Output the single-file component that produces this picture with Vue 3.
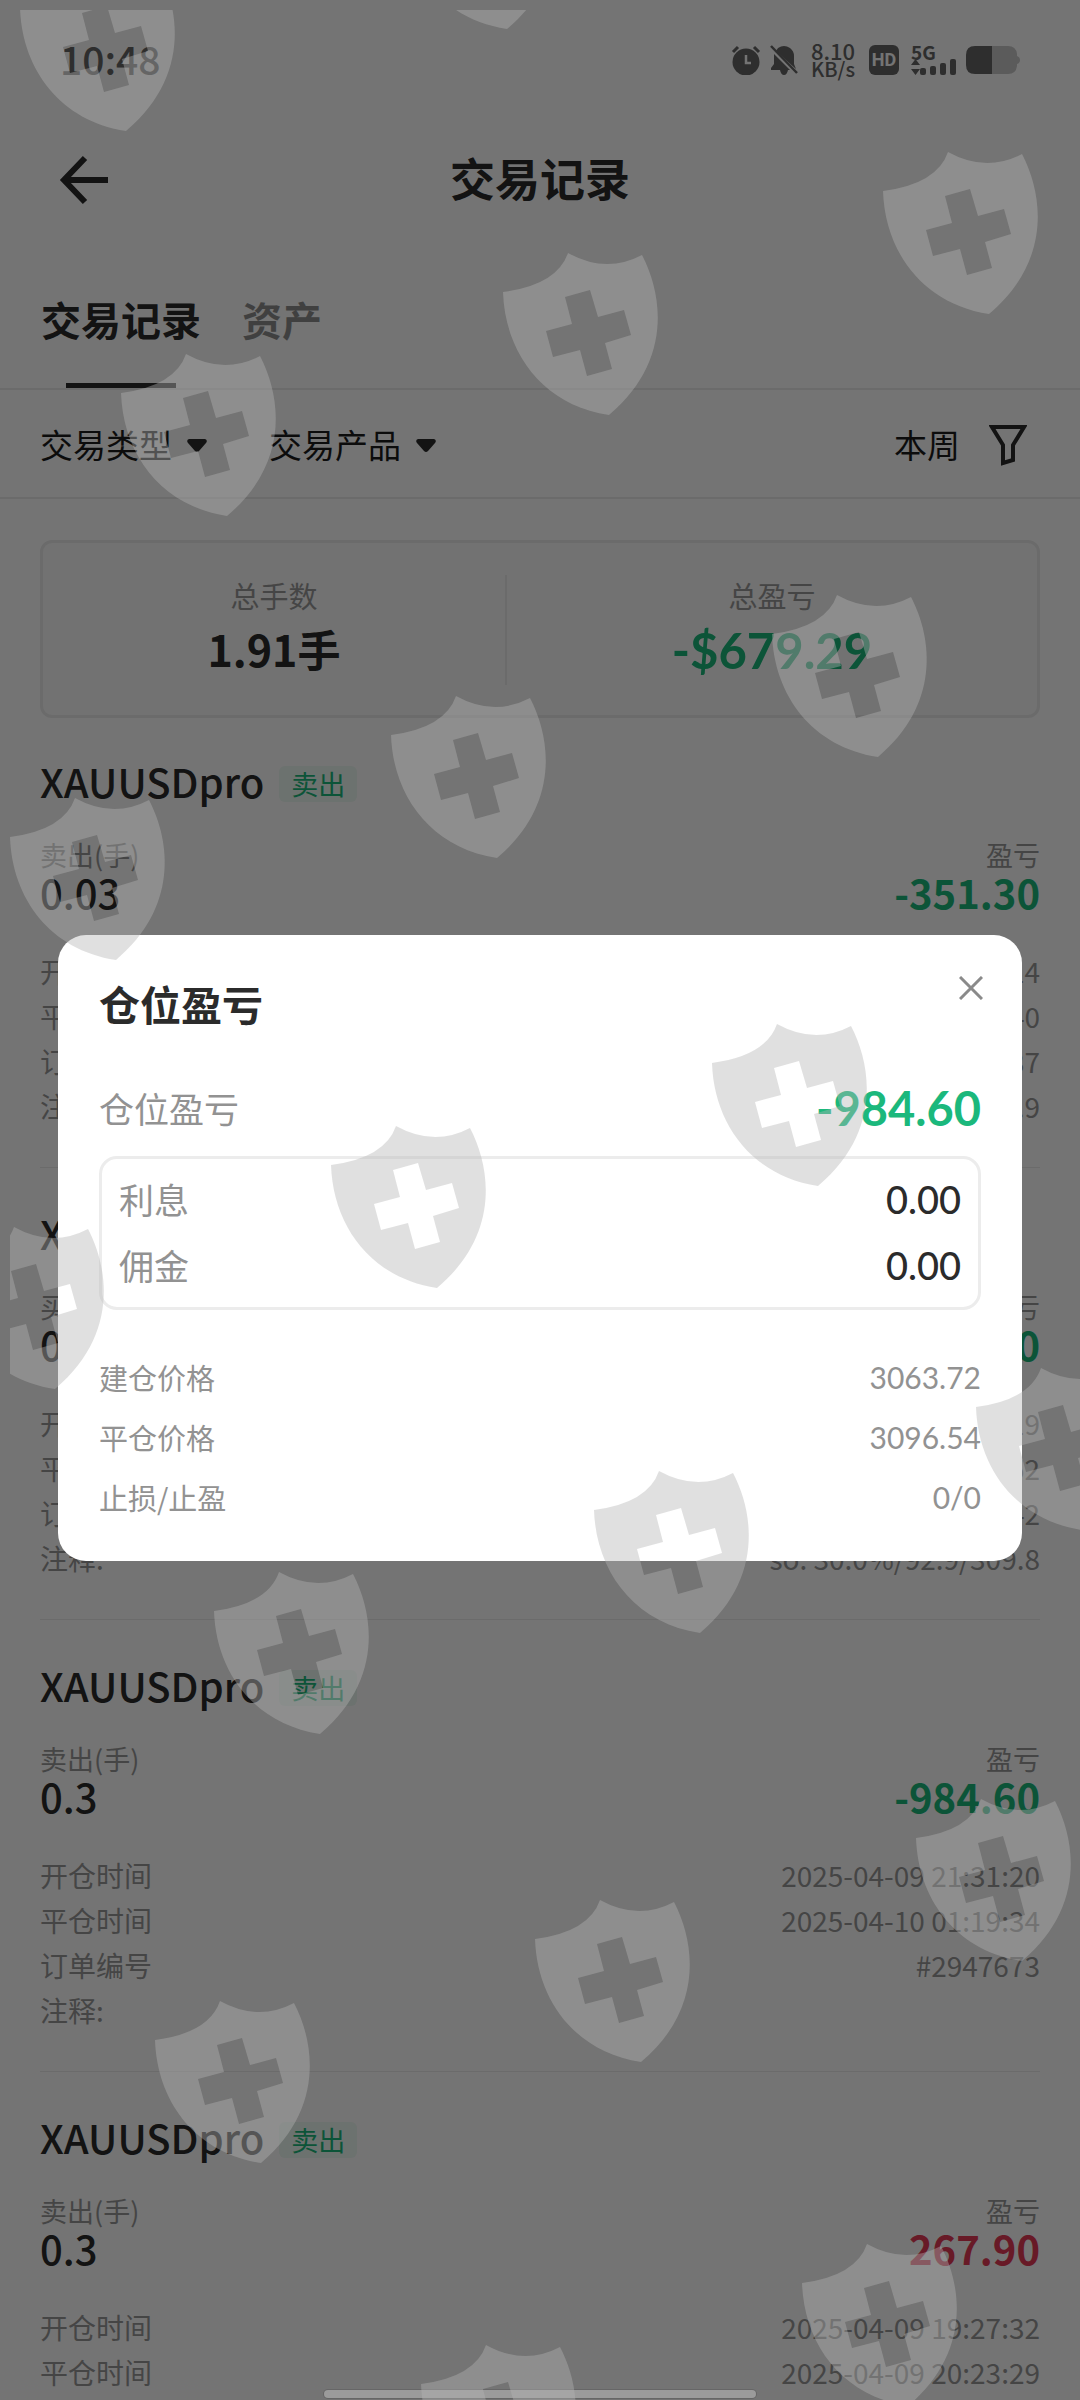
<script setup>
import { ref } from 'vue'

const dialogOpen = ref(true)

const trades = [
  {
    symbol: 'XAUUSDpro', tag: '卖出', side: '卖出(手)', lots: '0.03', profit: '-351.30', up: false,
    rows: [
      ['开仓时间', '2025-04-10 20:11:14'],
      ['平仓时间', '2025-04-10 21:02:40'],
      ['订单编号', '#2951037'],
      ['注释:', 'so: 29.9%/92.7/309.9'],
    ],
  },
  {
    symbol: 'XAUUSDpro', tag: '买入', side: '买入(手)', lots: '0.03', profit: '-108.60', up: false,
    rows: [
      ['开仓时间', '2025-04-10 09:20:19'],
      ['平仓时间', '2025-04-10 10:05:52'],
      ['订单编号', '#2949542'],
      ['注释:', 'so: 30.0%/92.9/309.8'],
    ],
  },
  {
    symbol: 'XAUUSDpro', tag: '卖出', side: '卖出(手)', lots: '0.3', profit: '-984.60', up: false,
    rows: [
      ['开仓时间', '2025-04-09 21:31:20'],
      ['平仓时间', '2025-04-10 01:19:34'],
      ['订单编号', '#2947673'],
      ['注释:', ''],
    ],
  },
  {
    symbol: 'XAUUSDpro', tag: '卖出', side: '卖出(手)', lots: '0.3', profit: '267.90', up: true,
    rows: [
      ['开仓时间', '2025-04-09 19:27:32'],
      ['平仓时间', '2025-04-09 20:23:29'],
    ],
  },
]

const fees = [['利息', '0.00'], ['佣金', '0.00']]
const prices = [['建仓价格', '3063.72'], ['平仓价格', '3096.54'], ['止损/止盈', '0/0']]

// Watermark tiles, laid along a slanted lattice
const shields = [
  [20, -31], [401, -133],
  [121, 354], [503, 253], [883, 152],
  [10, 798], [391, 696], [772, 595],
  [-51, 1227], [331, 1126], [712, 1024],
  [214, 1572], [594, 1471], [976, 1368],
  [155, 2001], [535, 1900], [916, 1799],
  [421, 2345], [802, 2244],
]
</script>

<template>
  <div class="screen">
    <header class="status">
      <time class="clock">10:48</time>
      <div class="status-icons">
        <svg class="alarm" width="30" height="30" viewBox="0 0 30 30">
          <circle cx="15" cy="17" r="13.500" fill="currentColor" />
          <path d="M2 7 L7 2 M28 7 L23 2" stroke="currentColor" stroke-width="3" />
          <path d="M15 10 V18 H20" fill="none" stroke="#fff" stroke-width="2.500" />
        </svg>
        <svg class="bell" width="28" height="30" viewBox="0 0 28 30">
          <path d="M8 3 Q14 -1 20 3 Q24 6 24 11 V19 L26 24 L6 6 Z M4 9 L20 25 H18 Q17 30 14 30 Q11 30 10 25 H1 V23 L4 19 Z" fill="currentColor" />
          <path d="M1 1 L27 28" stroke="currentColor" stroke-width="2.500" />
        </svg>
        <div class="speed"><span class="rate">8.10</span><span class="unit">KB/s</span></div>
        <span class="hd">HD</span>
        <div class="signal">
          <span>5G</span>
          <svg width="45" height="17" viewBox="0 0 45 17" fill="currentColor">
            <path d="M0 6 L4.500 0 L9 6 Z M0 10 L4.500 16 L9 10 Z" />
            <rect x="9" y="9" width="6" height="7" rx="2" />
            <rect x="19" y="7" width="6" height="9" rx="2" />
            <rect x="29" y="4" width="6" height="12" rx="2" />
            <rect x="39" y="0" width="6" height="16" rx="2" />
          </svg>
        </div>
        <svg class="battery" width="54" height="28" viewBox="0 0 54 28">
          <path d="M26 0 H42 Q50 0 51 8 V10 Q54 11 54 14 Q54 17 51 18 V20 Q50 28 42 28 H26 Z" fill="#c8c8c8" />
          <path d="M26 0 H9 Q0 0 0 9 V19 Q0 28 9 28 H26 Z" fill="currentColor" />
        </svg>
      </div>
    </header>

    <div class="titlebar">
      <button class="back" type="button" aria-label="返回">
        <svg width="50" height="50" viewBox="0 0 50 50" fill="none" stroke="currentColor" stroke-width="6">
          <path d="M26 3 L5 25 L26 47 M5 25 H49" />
        </svg>
      </button>
      <h1>交易记录</h1>
    </div>

    <nav class="tabs">
      <a href="#records" class="tab active">交易记录</a>
      <a href="#assets" class="tab">资产</a>
    </nav>

    <div class="filters">
      <button type="button">交易类型
        <svg width="20" height="16" viewBox="0 0 20 16"><path d="M2 3 H18 Q21 4 19 7 L12 15 Q10 17 8 15 L1 7 Q-1 4 2 3 Z" fill="#2b2b2b" /></svg>
      </button>
      <button type="button">交易产品
        <svg width="20" height="16" viewBox="0 0 20 16"><path d="M2 3 H18 Q21 4 19 7 L12 15 Q10 17 8 15 L1 7 Q-1 4 2 3 Z" fill="#2b2b2b" /></svg>
      </button>
      <button type="button" class="period">本周
        <svg width="38" height="44" viewBox="0 0 38 44"><path d="M3 5 H35 L24 23 V38 L14 41 V23 Z" fill="none" stroke="#2b2b2b" stroke-width="4" /></svg>
      </button>
    </div>

    <main>
      <section class="summary">
        <div class="sum lots"><span>总手数</span><strong>1.91手</strong></div>
        <div class="sum total"><span>总盈亏</span><strong class="down">-$679.29</strong></div>
      </section>

      <article v-for="(t, i) in trades" :key="i" class="trade">
        <h2>{{ t.symbol }}<span class="tag">{{ t.tag }}</span></h2>
        <div class="pair labels"><span>{{ t.side }}</span><span>盈亏</span></div>
        <div class="pair values">
          <span>{{ t.lots }}</span>
          <strong :class="t.up ? 'up' : 'down'">{{ t.profit }}</strong>
        </div>
        <dl>
          <div v-for="r in t.rows" :key="r[0]" class="pair"><dt>{{ r[0] }}</dt><dd>{{ r[1] }}</dd></div>
        </dl>
      </article>
    </main>

    <div v-if="dialogOpen" class="overlay">
      <section class="dialog" role="dialog" aria-modal="true" aria-labelledby="dialog-title">
        <header>
          <h2 id="dialog-title">仓位盈亏</h2>
          <button type="button" class="close" aria-label="关闭" @click="dialogOpen = false">
            <svg width="24" height="24" viewBox="0 0 24 24" stroke="#8a8a8a" stroke-width="3"><path d="M1 1 L23 23 M23 1 L1 23" /></svg>
          </button>
        </header>
        <div class="line main-line"><span>仓位盈亏</span><strong>-984.60</strong></div>
        <div class="fees">
          <div v-for="f in fees" :key="f[0]" class="line"><span>{{ f[0] }}</span><b>{{ f[1] }}</b></div>
        </div>
        <div class="prices">
          <div v-for="p in prices" :key="p[0]" class="line"><span>{{ p[0] }}</span><span class="price">{{ p[1] }}</span></div>
        </div>
      </section>
    </div>

    <div class="home-bar"></div>

    <svg class="watermark" aria-hidden="true">
      <defs>
        <path
          id="shield"
          fill-rule="evenodd"
          d="M0 39 Q54 32 65 0 Q103 21 139 2 C161 44 168 110 106 162 C40 152 2 100 0 39 Z
             M62 44 L87 37 L95 64 L121 57 L128 82 L102 90 L109 116 L84 123 L77 97 L50 104 L43 78 L69 71 Z"
        />
      </defs>
      <g transform="translate(-10 -10)" fill="#b4b4b4" fill-opacity="0.41">
        <use v-for="(s, i) in shields" :key="i" href="#shield" :x="s[0]" :y="s[1]" />
      </g>
    </svg>
  </div>
</template>

<style>
body {
  margin: 0;
}
</style>

<style scoped>
.screen {
  position: relative;
  height: 100vh;
  overflow: hidden;
  display: flex;
  flex-direction: column;
  background: #fff;
  color: #2b2b2b;
  font-family: "Noto Sans CJK SC", "Noto Sans", sans-serif;
}
.screen * {
  box-sizing: border-box;
}
button {
  border: 0;
  padding: 0;
  background: none;
  color: inherit;
  font: inherit;
  cursor: pointer;
}
svg {
  display: block;
  flex: none;
}
h1,
h2,
dl,
dd {
  margin: 0;
}

.status {
  flex: none;
  height: 120px;
  padding: 0 60px;
  display: flex;
  align-items: center;
  justify-content: space-between;
  color: #666;
}
.clock {
  padding-bottom: 5px;
  font-size: 39px;
  font-weight: 500;
}
.status-icons {
  display: flex;
  align-items: center;
}
.bell {
  margin-left: 9px;
}
.speed {
  margin-left: 13px;
  width: 44px;
  display: flex;
  flex-direction: column;
  align-items: center;
  font-weight: 500;
}
.rate {
  font-size: 22px;
  line-height: 17px;
}
.unit {
  font-size: 20px;
  line-height: 19px;
}
.hd {
  margin-left: 14px;
  width: 30px;
  height: 30px;
  border-radius: 6px;
  background: #666;
  color: #fff;
  font: bold 18px/30px "Roboto", sans-serif;
  text-align: center;
}
.signal {
  margin-left: 12px;
  font-size: 19px;
  font-weight: 700;
  line-height: 14px;
}
.battery {
  margin-left: 10px;
}

.titlebar {
  flex: none;
  height: 120px;
  padding: 0 59px;
  display: grid;
  grid-template-columns: 50px 1fr 50px;
  align-items: center;
}
h1 {
  padding-bottom: 4px;
  font-size: 45px;
  line-height: 60px;
  text-align: center;
}

.tabs {
  flex: none;
  height: 150px;
  padding: 0 41px;
  display: flex;
  gap: 41px;
  border-bottom: 2px solid #ececec;
}
.tab {
  padding-top: 49px;
  display: flex;
  flex-direction: column;
  align-items: center;
  justify-content: space-between;
  color: #8e8e8e;
  font-size: 40px;
  font-weight: 700;
  line-height: 60px;
  text-decoration: none;
}
.tab.active {
  color: #2b2b2b;
}
.tab.active::after {
  content: "";
  width: 110px;
  height: 5px;
  background: #2b2b2b;
}

.filters {
  flex: none;
  height: 109px;
  padding: 0 53px 0 40px;
  display: flex;
  align-items: center;
  gap: 62px;
  border-bottom: 2px solid #ececec;
  color: #1c1c1c;
  font-size: 33px;
  line-height: 50px;
}
.filters button {
  display: flex;
  align-items: center;
  gap: 15px;
}
.filters .period {
  margin-left: auto;
  gap: 29px;
}

main {
  flex: 1;
  min-height: 0;
  overflow: hidden;
  padding: 41px 40px 0;
}
.summary {
  height: 178px;
  padding: 32px 0;
  display: grid;
  grid-template-columns: 7fr 8fr;
  border: 3px solid #ececec;
  border-radius: 12px;
  background: #fafafa;
}
.sum {
  display: flex;
  flex-direction: column;
  align-items: center;
}
.lots {
  border-right: 2px solid #ececec;
}
.sum span {
  color: #999;
  font-size: 29px;
  line-height: 40px;
}
.sum strong {
  font-size: 43px;
  line-height: 66px;
}
.sum .down {
  font-family: "Lato", sans-serif;
  font-size: 49px;
  line-height: 70px;
}
.down {
  color: #1bb87c;
}
.up {
  color: #e43b56;
}

.trade {
  padding: 40px 0 38px;
  border-bottom: 1px solid #ececec;
  color: #999;
  font-size: 28px;
}
.summary + .trade {
  padding-top: 38px;
}
.trade h2 {
  display: flex;
  align-items: center;
  gap: 15px;
  color: #2b2b2b;
  font-size: 40px;
  font-weight: 500;
  line-height: 50px;
}
.tag {
  margin-top: 6px;
  padding: 0 12px;
  border-radius: 6px;
  background: #eefaf4;
  color: #1bb87c;
  font-size: 27px;
  font-weight: 400;
  line-height: 36px;
}
.pair,
.line {
  display: flex;
  align-items: center;
  justify-content: space-between;
}
.labels {
  margin-top: 31px;
  font-size: 27px;
  line-height: 36px;
}
.values {
  font-size: 40px;
  line-height: 38px;
}
.values span {
  color: #2b2b2b;
  font-weight: 500;
}
dl {
  margin-top: 38px;
  line-height: 45px;
}

.overlay {
  position: absolute;
  inset: 0;
  padding: 96px 58px 0;
  display: flex;
  align-items: center;
  background: rgba(0, 0, 0, 0.545);
}
.dialog {
  flex: 1;
  padding: 38px 41px 34px;
  border-radius: 28px;
  background: #fff;
}
.dialog header {
  margin-right: -2px;
  display: flex;
  justify-content: space-between;
}
.dialog h2 {
  font-size: 41px;
  line-height: 60px;
}
.close {
  align-self: flex-start;
  padding-top: 3px;
}
.dialog .line {
  color: #929292;
  font-size: 35px;
}
.main-line {
  margin-top: 45px;
  line-height: 60px;
}
.main-line strong {
  color: #1bb87c;
  font-family: "Lato", sans-serif;
  font-size: 47px;
}
.fees {
  margin-top: 18px;
  padding: 7px 17px 9px;
  border: 3px solid #ececec;
  border-radius: 18px;
  line-height: 66px;
}
.fees b {
  color: #2b2b2b;
  font-family: "Lato", sans-serif;
  font-size: 38px;
  font-weight: 500;
}
.prices {
  margin-top: 37px;
  line-height: 60px;
}
.dialog .prices .line {
  font-size: 29px;
}
.price {
  font-family: "Lato", sans-serif;
  font-size: 30px;
}

.home-bar {
  position: absolute;
  left: 30%;
  right: 30%;
  bottom: 2px;
  height: 8px;
  border-radius: 4px;
  background: #9b9b9b;
  box-shadow: 0 0 0 1px #666;
}
.watermark {
  position: absolute;
  left: 10px;
  top: 10px;
  width: calc(100% - 10px);
  height: calc(100% - 10px);
  pointer-events: none;
}
</style>
